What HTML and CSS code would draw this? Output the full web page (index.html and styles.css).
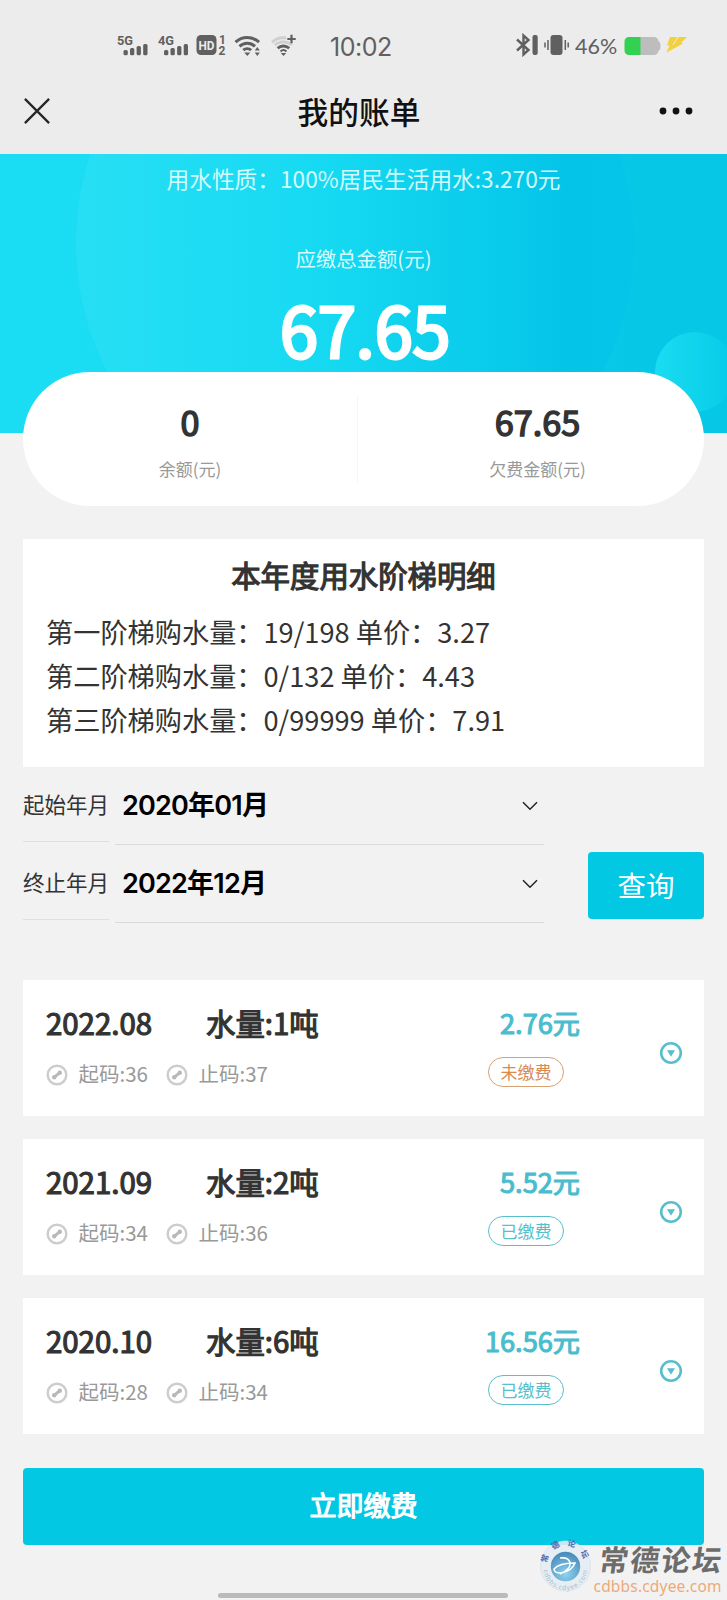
FILE: index.html
```html
<!DOCTYPE html>
<html lang="zh-CN">
<head>
<meta charset="utf-8">
<title>我的账单</title>
<link rel="stylesheet" href="styles.css">
</head>
<body>
<svg class="defs" width="0" height="0">
  <symbol id="code" viewBox="0 0 22 22"><circle cx="11" cy="11" r="9.3" fill="none" stroke="#cdcdcd" stroke-width="2.5"/><path d="M8.2 13.4 13.8 8.6" stroke="#b9b9b9" stroke-width="3"/><circle cx="8.2" cy="13.2" r="2.2" fill="#b9b9b9"/><circle cx="13.8" cy="8.8" r="2.2" fill="#b9b9b9"/></symbol>
  <symbol id="more" viewBox="0 0 24 24"><circle cx="12" cy="12" r="9.8" fill="none" stroke="#56bfcb" stroke-width="2.6"/><path d="M8 9.2h8L12 15.8z" fill="#56bfcb"/></symbol>
  <symbol id="chev" viewBox="0 0 16 10"><path d="M1 1.3 8 8.2 15 1.3" fill="none" stroke="#222" stroke-width="1.5"/></symbol>
</svg>
<div class="screen">
  <header class="top">
    <div class="status">
      <svg class="signals" width="186" height="30" viewBox="0 0 186 30">
        <g fill="#606060">
          <text class="net" x="2" y="13" textLength="16" lengthAdjust="spacingAndGlyphs">5G</text>
          <rect x="8.5" y="18" width="4.3" height="5.2" rx="1.5"/><rect x="15" y="16" width="4.3" height="7.2" rx="1.5"/><rect x="21.6" y="14" width="4.3" height="9.2" rx="1.5"/><rect x="28.2" y="12" width="4.3" height="11.2" rx="1.5"/>
          <text class="net" x="43" y="13" textLength="16" lengthAdjust="spacingAndGlyphs">4G</text>
          <rect x="49" y="18" width="4.3" height="5.2" rx="1.5"/><rect x="55.5" y="16" width="4.3" height="7.2" rx="1.5"/><rect x="62.1" y="14" width="4.3" height="9.2" rx="1.5"/><rect x="68.7" y="12" width="4.3" height="11.2" rx="1.5"/>
          <rect x="81.5" y="3" width="20" height="20" rx="4.5"/>
          <text class="hd" x="83.5" y="18" textLength="16" lengthAdjust="spacingAndGlyphs">HD</text>
          <text class="sim" x="104" y="11.5">1</text><text class="sim" x="103.5" y="23.3">2</text>
        </g>
        <path d="M120.5 10.2a17 17 0 0 1 23.5 0M124.5 14.3a11.2 11.2 0 0 1 15.5 0M128.3 18.2a5.8 5.8 0 0 1 7.8 0" fill="none" stroke="#606060" stroke-width="3"/>
        <path d="M129.3 20.5h6l-3 3.5zM139.8 18.5l2.5-3.5 2.5 3.5zM139.8 20.5l2.5 3.5 2.5-3.5z" fill="#606060"/>
        <g fill="none" stroke-width="2.8">
          <path d="M157 10.2a17 17 0 0 1 14-4.2M159.8 13a13 13 0 0 1 17 0" stroke="#cfcfcf"/>
          <path d="M162.6 16.2a8.8 8.8 0 0 1 11.6 0" stroke="#606060"/>
          <path d="M165.5 19.4a4.5 4.5 0 0 1 6 0" stroke="#606060" stroke-width="2"/>
          <path d="M176.5 2.8v8.4M172.3 7h8.4" stroke="#606060" stroke-width="2.2"/>
        </g>
        <path d="M165.8 21h5.4l-2.7 3z" fill="#606060"/>
      </svg>
      <span class="clock">10:02</span>
      <svg class="radios" width="56" height="24" viewBox="0 0 56 24">
        <path d="M1 6.5 12.5 17 7.5 21.5V2.5L12.5 7 1 17.5" fill="none" stroke="#606060" stroke-width="2.4"/>
        <rect x="16.5" y="2" width="5.2" height="20" rx="2" fill="#606060"/>
        <rect x="34.5" y="2" width="12" height="20" rx="3" fill="#606060"/>
        <path d="M32 7v10M29 9.5v5M49.3 7v10M52.2 9.5v5" stroke="#606060" stroke-width="1.5"/>
      </svg>
      <span class="percent">46%</span>
      <svg class="battery" width="66" height="24" viewBox="0 0 66 24">
        <path d="M16 4h14a4.500 4.500 0 0 1 4.500 4.500q2 0 2 4.500t-2 4.500a4.500 4.500 0 0 1-4.500 4.500H16z" fill="#bdbdbd"/>
        <path d="M16.500 4H5a4.500 4.500 0 0 0-4.500 4.500v9A4.500 4.500 0 0 0 5 22h11.500z" fill="#32d152"/>
        <path d="M46 4H63L57 10H60L42.500 19.500l3-7H43z" fill="#f2d13c"/><path d="M54 4 49 12" stroke="#ececec" stroke-width="1"/>
      </svg>
    </div>
    <div class="nav">
      <svg width="26" height="26" viewBox="0 0 26 26"><path d="M.9.9 25.100 25.100M25.100.9.9 25.100" fill="none" stroke="#262626" stroke-width="2.300"/></svg>
      <h1>我的账单</h1>
      <svg width="34" height="8" viewBox="0 0 34 8"><circle cx="4" cy="4" r="3.400" fill="#111"/><circle cx="17" cy="4" r="3.400" fill="#111"/><circle cx="30" cy="4" r="3.400" fill="#111"/></svg>
    </div>
  </header>

  <section class="hero">
    <p class="nature">用水性质：100%居民生活用水:3.270元</p>
    <p class="due">应缴总金额(元)</p>
    <p class="total">67.65</p>
  </section>

  <section class="balance">
    <div class="half left"><b>0</b><span>余额(元)</span></div>
    <div class="rule"></div>
    <div class="half right"><b>67.65</b><span>欠费金额(元)</span></div>
  </section>

  <section class="tiers">
    <h2>本年度用水阶梯明细</h2>
    <p>第一阶梯购水量：19/198 单价：3.27</p>
    <p>第二阶梯购水量：0/132 单价：4.43</p>
    <p>第三阶梯购水量：0/99999 单价：7.91</p>
  </section>

  <section class="filter">
    <div class="fields">
      <div class="field"><label>起始年月</label><div class="select"><span>2020年01月</span><svg width="16" height="10"><use href="#chev"/></svg></div></div>
      <div class="field"><label>终止年月</label><div class="select"><span>2022年12月</span><svg width="16" height="10"><use href="#chev"/></svg></div></div>
    </div>
    <button class="query">查询</button>
  </section>

  <section class="records">
    <article class="record">
      <div class="info"><div class="main"><b class="month">2022.08</b><b>水量:1吨</b></div>
        <div class="codes"><svg width="22" height="22"><use href="#code"/></svg><span>起码:36</span><svg width="22" height="22"><use href="#code"/></svg><span>止码:37</span></div></div>
      <div class="cost"><b>2.76元</b><span class="tag unpaid">未缴费</span></div>
      <svg class="more" width="24" height="24"><use href="#more"/></svg>
    </article>
    <article class="record">
      <div class="info"><div class="main"><b class="month">2021.09</b><b>水量:2吨</b></div>
        <div class="codes"><svg width="22" height="22"><use href="#code"/></svg><span>起码:34</span><svg width="22" height="22"><use href="#code"/></svg><span>止码:36</span></div></div>
      <div class="cost"><b>5.52元</b><span class="tag">已缴费</span></div>
      <svg class="more" width="24" height="24"><use href="#more"/></svg>
    </article>
    <article class="record">
      <div class="info"><div class="main"><b class="month">2020.10</b><b>水量:6吨</b></div>
        <div class="codes"><svg width="22" height="22"><use href="#code"/></svg><span>起码:28</span><svg width="22" height="22"><use href="#code"/></svg><span>止码:34</span></div></div>
      <div class="cost"><b>16.56元</b><span class="tag">已缴费</span></div>
      <svg class="more" width="24" height="24"><use href="#more"/></svg>
    </article>
  </section>

  <button class="pay">立即缴费</button>
  <div class="homebar"></div>

  <svg class="forum" width="190" height="70" viewBox="0 -10 190 70">
    <defs>
      <radialGradient id="ball" cx=".5" cy=".75" r=".7"><stop offset="0" stop-color="#8fd4ee"/><stop offset="1" stop-color="#4b8dbd"/></radialGradient>
      <path id="arcTop" d="M10 25a18.500 18.500 0 0 1 37 0"/>
      <path id="arcBottom" d="M6.500 29a22 22 0 0 0 44 0"/>
    </defs>
    <circle cx="28.500" cy="27" r="25" fill="#e4ecf3" fill-opacity=".88" stroke="#d2dfe9" stroke-width=".7"/>
    <circle cx="28.500" cy="27.500" r="14.700" fill="url(#ball)"/>
    <path d="M23 19q9-1 10 5t-10 11M17 30q5-6 21-6-3 8-14 10-7 0-7-4z" fill="none" stroke="#fff" stroke-width="1.600"/>
    <text class="ring-cn"><textPath href="#arcTop" startOffset="1" textLength="52">常德论坛</textPath></text>
    <text class="ring-en"><textPath href="#arcBottom" startOffset="2" textLength="64">cdbbs.cdyee.com</textPath></text>
    <text class="brush" transform="translate(61 31.500) skewX(-8)" textLength="122">常德论坛</text>
    <text class="site" x="56.500" y="53" textLength="128">cdbbs.cdyee.com</text>
  </svg>
</div>
</body>
</html>
```
FILE: styles.css
```css
* { box-sizing: border-box; }
body { margin: 0; background: #f2f2f2; font-family: "Noto Sans CJK SC", sans-serif; color: #333; }
h1, h2, p { margin: 0; }
button { border: 0; padding: 0; font-family: inherit; color: #fff; background: #03c8e4; }
svg { display: block; flex: none; }
.defs { position: absolute; }
.screen { position: relative; width: 727px; height: 1600px; overflow: hidden; white-space: nowrap; }

.top { height: 154px; background: #ececec; }
.status { display: flex; height: 68px; padding: 32px 0 0 115px; }
.signals { margin-top: 0; }
.net { font: 700 13.500px Roboto, sans-serif; }
.hd { font: 700 13px Roboto, sans-serif; fill: #ececec; }
.sim { font: 700 12px Roboto, sans-serif; }
.clock { width: 66px; margin-left: 29px; line-height: 30px; font-family: Inter, sans-serif; font-size: 25px; letter-spacing: -.5px; color: #606060; }
.radios { margin: 1px 0 0 120px; }
.percent { width: 50px; margin-left: 3px; line-height: 28px; font-family: Lato, sans-serif; font-size: 21.500px; color: #606060; }
.battery { margin: 1px 0 0 -1px; }
.nav { display: flex; justify-content: space-between; align-items: center; height: 86px; padding: 0 34px 0 24px; }
.nav h1 { padding-left: 9px; font-size: 30.700px; font-weight: 500; color: #111; line-height: 44px; }

.hero {
  position: relative; z-index: 0; height: 279px; overflow: hidden; color: #fff; text-align: center;
  background: linear-gradient(90deg, #1addf3 0, #1addf3 36%, #06c7e6 88%, #06c7e6 100%);
}
.hero::before { content: ""; position: absolute; z-index: -1; left: 76px; top: -190px; width: 558px; height: 558px; border-radius: 50%; background: linear-gradient(90deg, #27dff4 0, #17daf2 42%, #04c5e8 88%, #05c5e8 100%); }
.hero::after { content: ""; position: absolute; z-index: -1; left: 655px; top: 178px; width: 80px; height: 80px; border-radius: 50%; background: linear-gradient(90deg, #1adcf1, #06cae8); }
.nature { padding-top: 9px; font-size: 22.700px; line-height: 32px; color: #d2fbfd; }
.due { margin-top: 48px; font-size: 20.400px; line-height: 30px; color: #d8fbfd; }
.total { margin-top: 10px; padding-left: 3px; font-size: 69px; line-height: 90px; font-weight: 400; letter-spacing: -.4px; -webkit-text-stroke: 3px #fff; }

.balance { position: relative; z-index: 1; display: flex; height: 134px; margin: -61px 23px 0; border-radius: 67px; background: #fff; align-items: center; }
.half { display: flex; flex-direction: column; align-items: center; }
.left { width: 334px; }
.right { flex: 1; padding-left: 13px; }
.half b { font-size: 34.200px; line-height: 46px; font-weight: 400; -webkit-text-stroke: 1.500px #333; }
.half span { margin-top: 13px; font-size: 17px; line-height: 24px; color: #999; }
.rule { width: 1px; height: 86px; background: #f5f5f5; }

.tiers { height: 228px; margin: 33px 23px 0; padding: 13px 23px 0; background: #fff; }
.tiers h2 { margin-bottom: 13px; text-align: center; font-size: 29.400px; line-height: 44px; font-weight: 400; -webkit-text-stroke: 1.200px #333; }
.tiers p { font-size: 27.200px; line-height: 44px; }

.filter { display: flex; justify-content: space-between; align-items: flex-end; height: 156px; margin: 0 23px; }
.fields { align-self: flex-start; }
.field { display: flex; height: 78px; gap: 6px; }
.field label { width: 86px; height: 75px; border-bottom: 1px solid #dfdfdf; font-size: 21.500px; line-height: 73px; }
.select { display: flex; justify-content: space-between; align-items: center; width: 429px; height: 78px; border-bottom: 1px solid #dadada; padding: 0 6px 0 7px; font-family: Inter, "Noto Sans CJK SC", sans-serif; font-size: 27px; font-weight: 600; letter-spacing: -.8px; color: #000; }
.select span { padding-bottom: 4px; }
.query { width: 116px; height: 67px; margin-bottom: 4px; padding-bottom: 2px; border-radius: 4px; font-size: 28.500px; }

.records { display: flex; flex-direction: column; gap: 23px; margin: 57px 23px 0; }
.record { display: flex; height: 136px; padding: 0 21px 0 23px; background: #fff; }
.info { width: 437px; padding-top: 20px; }
.main { display: flex; line-height: 44px; font-size: 29.400px; }
.main b { font-weight: 400; -webkit-text-stroke: 1.200px #333; }
.month { width: 160px; }
.codes { display: flex; align-items: center; margin-top: 14px; line-height: 30px; font-size: 20.500px; color: #999; }
.codes svg { margin-top: 4px; }
.codes span { margin-left: 10.500px; }
.codes span + svg { margin-left: 18px; }
.cost { display: flex; flex-direction: column; align-items: flex-end; width: 97px; padding-top: 20px; }
.cost b { font-size: 27.200px; line-height: 44px; font-weight: 400; color: #49bdcd; -webkit-text-stroke: 1.100px #49bdcd; }
.tag { align-self: flex-start; width: 76px; height: 30px; margin: 13px 0 0 5px; border: 1px solid #56bfcb; border-radius: 15px; font-size: 17px; line-height: 27px; text-align: center; color: #56bfcb; }
.unpaid { color: #d98a4e; border-color: #d9a070; }
.more { margin: 61px 0 0 auto; }

.pay { display: block; width: 681px; height: 77px; margin: 34px 23px 0; padding-bottom: 4px; border-radius: 4px; font-size: 27px; font-weight: 400; -webkit-text-stroke: 1.100px #fff; }
.homebar { width: 290px; height: 5px; margin: 48px 0 0 218px; border-radius: 3px; background: #bababa; }
.forum { position: absolute; left: 537px; top: 1529px; }
.ring-cn { font: 700 8px "Noto Sans CJK SC", sans-serif; fill: #4a68b0; }
.ring-en { font: 6.500px "Noto Sans", sans-serif; fill: #a9bed0; }
.brush { font: 700 29px "Noto Sans CJK SC", sans-serif; fill: #6c6c6c; }
.site { font: 15.500px "Noto Sans", sans-serif; fill: #edaa78; }
```
